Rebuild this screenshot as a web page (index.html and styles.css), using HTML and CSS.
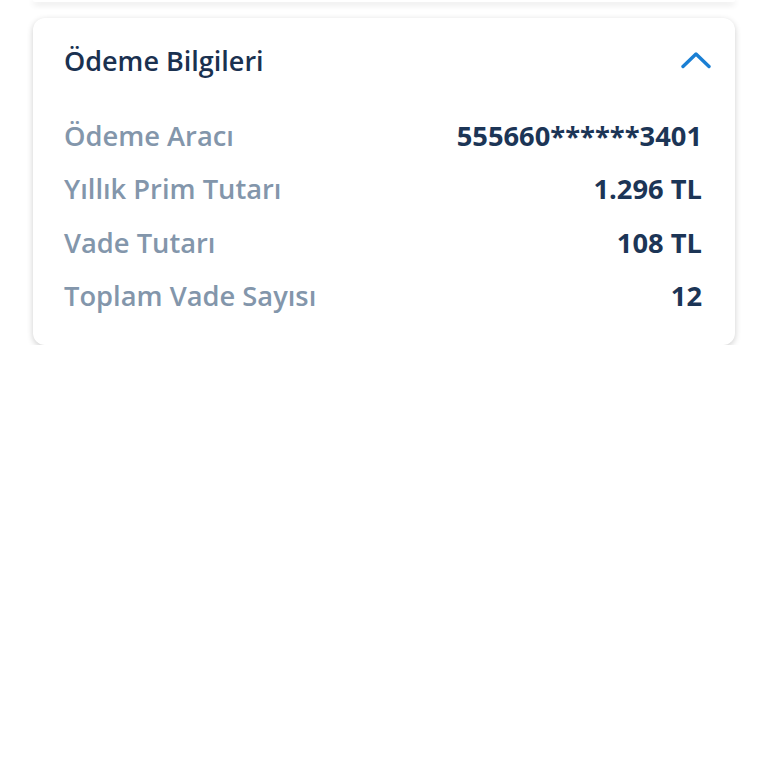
FILE: index.html
```html
<!DOCTYPE html>
<html lang="tr">
<head>
  <meta charset="UTF-8">
  <title>Ödeme Bilgileri</title>
  <link rel="stylesheet" href="styles.css">
</head>
<body>
<div class="page">
  <div class="card card-prev"></div>
  <div class="card">
    <div class="card-head">
      <h2 class="card-title">Ödeme Bilgileri</h2>
      <svg class="chevron" width="30" height="18" viewBox="0 0 30 18">
        <path d="M2 15.5 L15 3 L28 15.5" fill="none" stroke="#1a7fd4" stroke-width="3.4" stroke-linecap="round" stroke-linejoin="round"/>
      </svg>
    </div>
    <ul class="info-list">
      <li><span class="label">Ödeme Aracı</span><span class="value">555660******3401</span></li>
      <li><span class="label">Yıllık Prim Tutarı</span><span class="value">1.296 TL</span></li>
      <li><span class="label">Vade Tutarı</span><span class="value">108 TL</span></li>
      <li><span class="label">Toplam Vade Sayısı</span><span class="value">12</span></li>
    </ul>
  </div>
</div>
</body>
</html>
```

FILE: styles.css
```css
* {
  margin: 0;
  padding: 0;
  box-sizing: border-box;
}
ul,li {
  list-style: none;
}
body {
  background: #fff;
  font-family: "Open Sans", "Noto Sans", sans-serif;
}
.page {
  padding: 0 33px;
  display: flex;
  flex-direction: column;
  gap: 16px;
}
.card {
  background: #fff;
  border-radius: 12px;
  box-shadow: 0 2px 6px rgba(0,0,0,.2);
}
.card-prev {
  height: 2px;
  border-radius: 0 0 12px 12px;
}
.card-head {
  display: flex;
  align-items: center;
  justify-content: space-between;
  padding: 0 24px 0 31px;
  height: 84px;
}
.card-title {
  font-size: 27px;
  font-weight: 600;
  color: #1a3150;
}
.info-list {
  padding: 7px 33px 23px 31px;
}
.info-list li {
  display: flex;
  justify-content: space-between;
  align-items: center;
  height: 53.3px;
  font-size: 27.3px;
}
.label {
  color: #8396ab;
  font-weight: 600;
}
.value {
  color: #1c3556;
  font-weight: 700;
}
```
